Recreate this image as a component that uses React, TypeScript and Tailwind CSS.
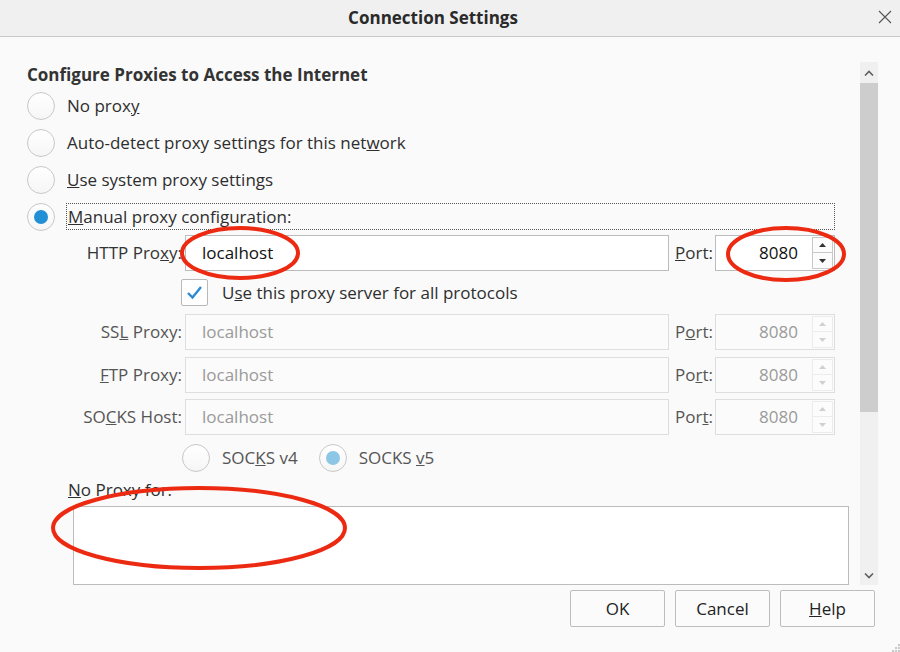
import type { ReactNode } from 'react'

const FONT = { fontFamily: '"Open Sans", "Noto Sans", Arial, sans-serif' }

function Radio({ checked, disabled }: { checked?: boolean; disabled?: boolean }) {
  return (
    <span className="flex h-[28px] w-[28px] shrink-0 items-center justify-center rounded-full border border-[#c8c8c8] bg-gradient-to-b from-white to-[#f6f6f6]">
      {checked && (
        <span className={disabled ? 'h-[14px] w-[14px] rounded-full bg-[#8ec6e6]' : 'h-[14px] w-[14px] rounded-full bg-[#2290d4]'} />
      )}
    </span>
  )
}

function Spinner({ disabled }: { disabled?: boolean }) {
  const c = disabled ? '#d0d0d0' : '#333'
  const b = disabled ? 'border-[#ececec]' : 'border-[#c8c8c8]'
  return (
    <div className="flex h-[32px] w-[21px] flex-col">
      <div className={`flex h-[16px] items-center justify-center border ${b} bg-[#fcfcfc]`}>
        <svg width="7" height="4" viewBox="0 0 7 4"><path d="M0 4 L3.5 0 L7 4 Z" fill={c} /></svg>
      </div>
      <div className={`flex h-[16px] items-center justify-center border border-t-0 ${b} bg-[#fcfcfc]`}>
        <svg width="7" height="4" viewBox="0 0 7 4"><path d="M0 0 L7 0 L3.5 4 Z" fill={c} /></svg>
      </div>
    </div>
  )
}

function ProxyRow({
  label,
  value,
  port,
  disabled,
  className,
}: {
  label: ReactNode
  value: string
  port: ReactNode
  disabled?: boolean
  className?: string
}) {
  const border = disabled ? 'border-[#dedede] bg-[#fbfbfb] text-[#9a9a9a]' : 'border-[#bcbcbc] bg-white text-[#111]'
  return (
    <div className={`flex h-[36px] items-center ${className ?? ''}`}>
      <div className={`w-[158px] pr-[3px] text-right ${disabled ? 'text-[#555]' : 'text-[#333]'}`}>{label}</div>
      <div className={`flex h-[36px] flex-1 items-center border px-[16px] ${border}`}>{value}</div>
      <div className={`w-[46px] pl-[6px] ${disabled ? 'text-[#555]' : 'text-[#333]'}`}>{port}</div>
      <div className={`flex h-[36px] w-[120px] items-center justify-end gap-[14px] border pr-[1px] ${border}`}>
        <span>8080</span>
        <Spinner disabled={disabled} />
      </div>
    </div>
  )
}

export default function App() {
  return (
    <div className="relative h-[652px] w-[900px] overflow-hidden bg-[#fafafa] text-[17px] text-[#2e2e2e]" style={FONT}>
      <div className="relative flex h-[37px] items-center justify-center border-b border-[#c8c8c8] bg-[#f0f0f0]">
        <span className="pr-[34px] text-[17px] font-bold text-[#2a2a2a]">Connection Settings</span>
        <svg className="absolute right-[8px] top-[10px]" width="14" height="14" viewBox="0 0 14 14">
          <path d="M1 1 L13 13 M13 1 L1 13" stroke="#555" strokeWidth="1.1" />
        </svg>
      </div>

      <div className="flex h-[548px] pt-[25px]">
        <div className="flex-1 overflow-hidden pl-[27px] pr-[25px]">
          <div className="mt-[1px] flex h-[24px] items-center font-bold text-[#333]">Configure Proxies to Access the Internet</div>

          <div className="flex h-[37px] items-center gap-[12px]">
            <Radio />
            <span>No prox<u>y</u></span>
          </div>
          <div className="flex h-[37px] items-center gap-[12px]">
            <Radio />
            <span>Auto-detect proxy settings for this net<u>w</u>ork</span>
          </div>
          <div className="flex h-[37px] items-center gap-[12px]">
            <Radio />
            <span><u>U</u>se system proxy settings</span>
          </div>
          <div className="flex h-[37px] items-center gap-[11px]">
            <Radio checked />
            <span className="flex h-[27px] flex-1 items-center border border-dotted border-[#555] pl-px">
              <span><u>M</u>anual proxy configuration:</span>
            </span>
          </div>

          <ProxyRow label={<>HTTP Pro<u>x</u>y:</>} value="localhost" port={<><u>P</u>ort:</>} />

          <div className="flex h-[43px] items-center">
            <span className="ml-[154px] flex h-[27px] w-[27px] items-center justify-center rounded-[2px] border border-[#b8b8b8] bg-white">
              <svg width="17" height="15" viewBox="0 0 17 15">
                <path d="M2 8 L6.5 12.5 L15 2" fill="none" stroke="#2a8ad4" strokeWidth="2.4" />
              </svg>
            </span>
            <span className="ml-[14px]">U<u>s</u>e this proxy server for all protocols</span>
          </div>

          <ProxyRow disabled label={<>SS<u>L</u> Proxy:</>} value="localhost" port={<>P<u>o</u>rt:</>} />
          <ProxyRow disabled className="mt-[7px]" label={<><u>F</u>TP Proxy:</>} value="localhost" port={<>Po<u>r</u>t:</>} />
          <ProxyRow disabled className="mt-[6px]" label={<>SO<u>C</u>KS Host:</>} value="localhost" port={<>Por<u>t</u>:</>} />

          <div className="mt-[9px] flex h-[28px] items-center text-[#555]">
            <span className="ml-[155px]"><Radio /></span>
            <span className="ml-[12px]">SOC<u>K</u>S v4</span>
            <span className="ml-[21px]"><Radio checked disabled /></span>
            <span className="ml-[12px]">SOCKS <u>v</u>5</span>
          </div>

          <div className="mt-[6px] flex h-[24px] items-center pl-[41px]"><span><u>N</u>o Proxy for:</span></div>
          <div className="mt-[4px] ml-[46px] mr-[-14px] h-[79px] border border-[#bcbcbc] bg-white" />
        </div>

        <div className="flex h-[523px] w-[18px] flex-col bg-[#f0f0f0]">
          <div className="flex h-[21px] items-center justify-center">
            <svg width="10" height="6" viewBox="0 0 10 6"><path d="M1 5.5 L5 1.5 L9 5.5" fill="none" stroke="#606060" strokeWidth="1.6" /></svg>
          </div>
          <div className="h-[329px] bg-[#cdcdcd]" />
          <div className="flex flex-1 items-end justify-center pb-[6px]">
            <svg width="10" height="6" viewBox="0 0 10 6"><path d="M1 0.5 L5 4.5 L9 0.5" fill="none" stroke="#606060" strokeWidth="1.6" /></svg>
          </div>
        </div>
        <div className="w-[22px]" />
      </div>

      <div className="mt-[5px] flex justify-end gap-[10px] pr-[25px]">
        {[
          { k: 'ok', l: <>OK</> },
          { k: 'cancel', l: <>Cancel</> },
          { k: 'help', l: <><u>H</u>elp</> },
        ].map((b) => (
          <button
            key={b.k}
            className="flex h-[37px] w-[95px] items-center justify-center rounded-[2px] border border-[#bdbdbd] bg-[#fbfbfb] text-[17px] text-[#222]"
          >
            {b.l}
          </button>
        ))}
      </div>

      <svg className="absolute right-0 bottom-0" width="8" height="8" viewBox="0 0 8 8">
        <rect x="6" y="0" width="2" height="2" fill="#c8c8c8" />
        <rect x="3" y="3" width="2" height="2" fill="#c8c8c8" />
        <rect x="6" y="3" width="2" height="2" fill="#c8c8c8" />
        <rect x="0" y="6" width="2" height="2" fill="#c8c8c8" />
        <rect x="3" y="6" width="2" height="2" fill="#c8c8c8" />
        <rect x="6" y="6" width="2" height="2" fill="#c8c8c8" />
      </svg>

      <svg className="pointer-events-none absolute inset-0" width="900" height="652">
        <ellipse cx="240" cy="253" rx="58" ry="25" fill="none" stroke="#ec2a12" strokeWidth="4" />
        <ellipse cx="786" cy="254" rx="58" ry="26" fill="none" stroke="#ec2a12" strokeWidth="4" />
        <ellipse cx="199" cy="528" rx="146" ry="40" fill="none" stroke="#ec2a12" strokeWidth="4" />
      </svg>
    </div>
  )
}
